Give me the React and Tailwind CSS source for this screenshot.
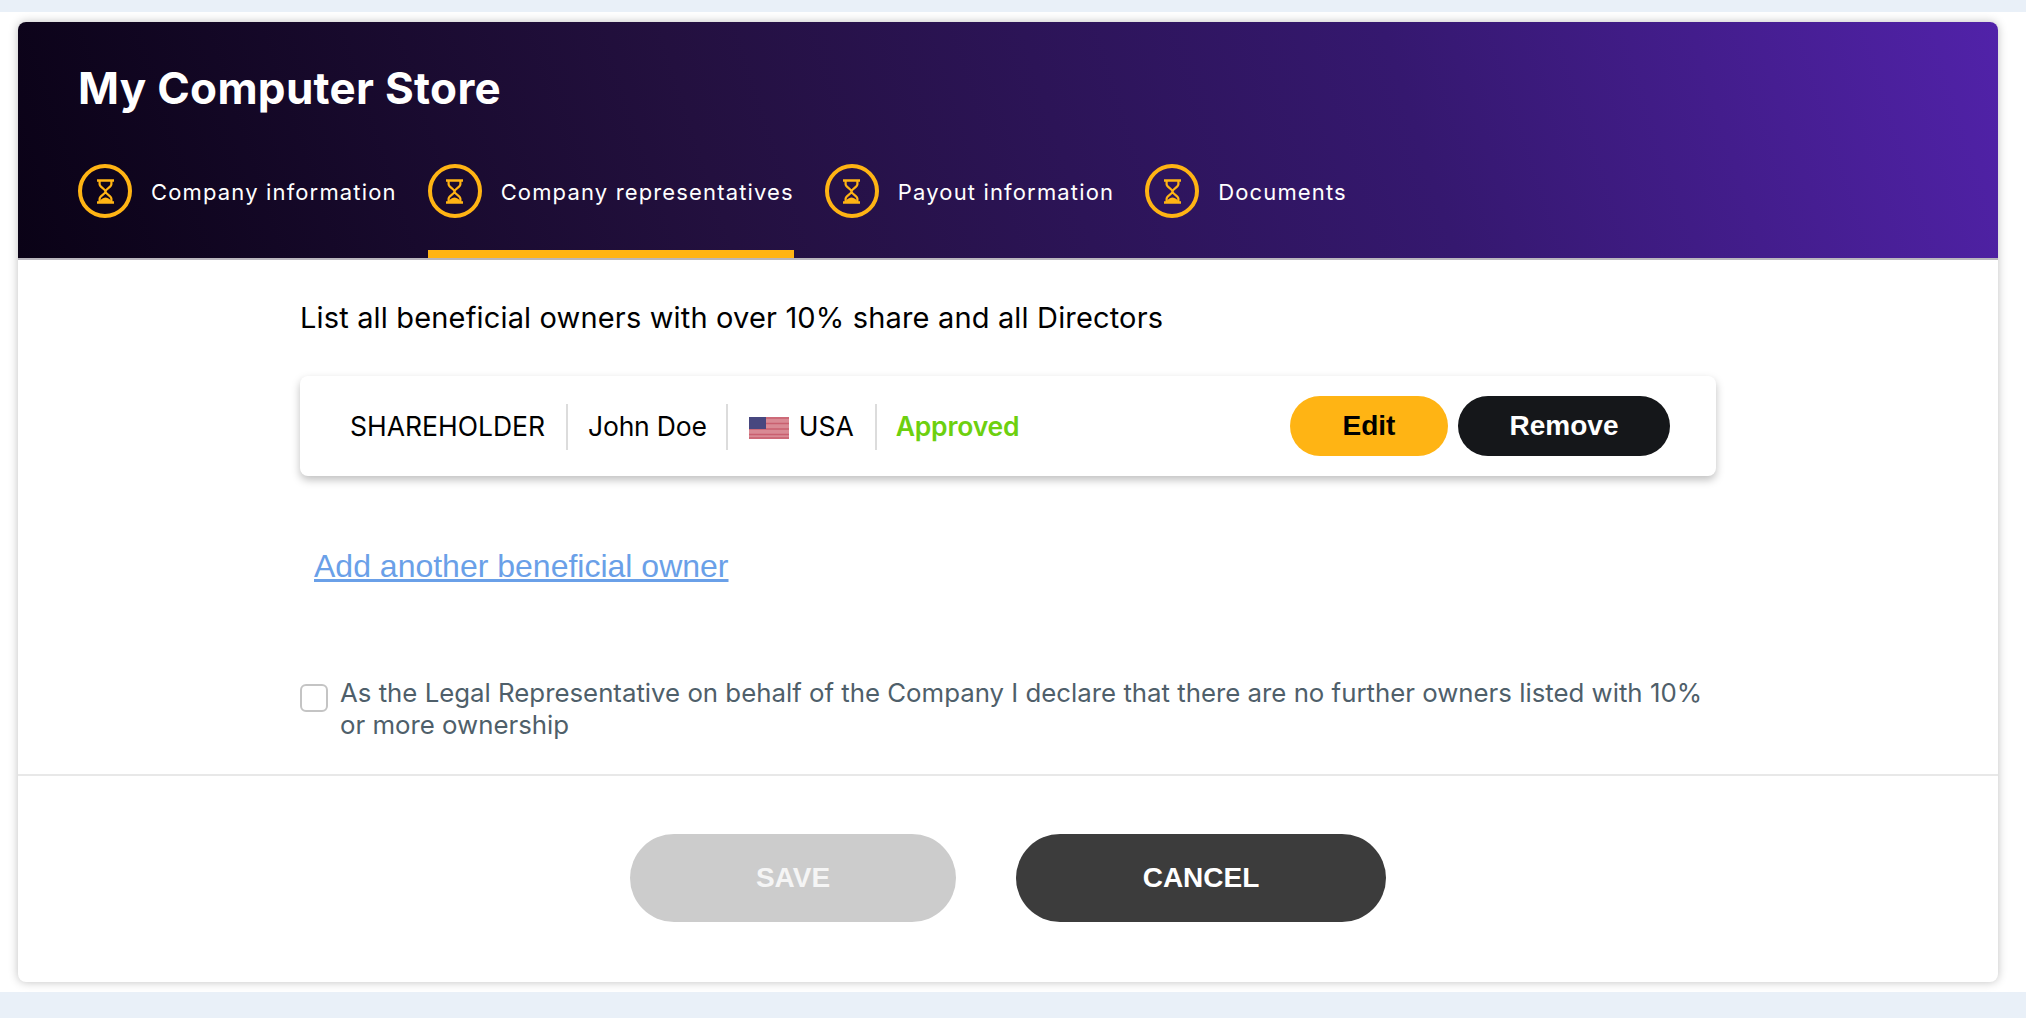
// Company representatives step of the onboarding form
import React from "react";

const tabs = [
  { label: "Company information" },
  { label: "Company representatives", active: true },
  { label: "Payout information" },
  { label: "Documents" },
];

function Hourglass() {
  return (
    <svg width="17" height="25" viewBox="0 0 17 25" fill="none">
      <path d="M0.5 1.5H16.5M0.5 23.5H16.5" stroke="#ffb414" strokeWidth="2.6" strokeLinecap="round" />
      <path
        d="M2.6 2V5.2C2.6 8 8.5 10 8.5 12.5C8.5 15 2.6 17 2.6 19.8V23M14.4 2V5.2C14.4 8 8.5 10 8.5 12.5C8.5 15 14.4 17 14.4 19.8V23"
        stroke="#ffb414"
        strokeWidth="2.2"
      />
      <path d="M3 23L3.4 21C5 19.4 7 18.8 8.5 18.6C10 18.8 12 19.4 13.6 21L14 23Z" fill="#ffb414" />
    </svg>
  );
}

function Flag() {
  return (
    <svg width="40" height="22" viewBox="0 0 40 22" className="mt-1 shrink-0">
      <rect width="40" height="22" fill="#d98a94" />
      <path d="M0 1H40M0 6.5H40M0 12H40M0 17.5H40M0 21H40" stroke="#c9606f" strokeWidth="1.7" />
      <rect width="17" height="12" fill="#47477f" />
    </svg>
  );
}

export default function App() {
  return (
    <div className="h-[1018px] bg-[#e9f0f8] pt-3 font-['Inter',sans-serif]">
      <div className="h-[980px] bg-white pl-[18px] pr-[28px] pt-[10px]">
        <div className="flex h-[960px] flex-col rounded-lg bg-white shadow-[0_0_10px_rgba(0,0,0,0.25)]">
          <div className="h-[238px] rounded-t-lg border-b-2 border-[#b9b6bd] bg-[linear-gradient(72deg,#0a0216_0%,#23103f_35%,#35186f_70%,#5122a9_100%)] pl-[60px] pt-[44px]">
            <h1 className="text-[44px] leading-[44px] font-bold tracking-[0.3px] text-white">My Computer Store</h1>
            <div className="mt-[54px] flex gap-[31px]">
              {tabs.map((t) => (
                <div
                  key={t.label}
                  className={`flex h-[94px] items-start gap-[19px] border-b-8 ${
                    t.active ? "border-[#ffb414]" : "border-transparent"
                  }`}
                >
                  <div className="flex h-[54px] w-[54px] items-center justify-center rounded-full border-[4px] border-[#ffb414]">
                    <Hourglass />
                  </div>
                  <span className="text-[22px] leading-[56px] tracking-[1.15px] text-white">{t.label}</span>
                </div>
              ))}
            </div>
          </div>

          <div className="pl-[282px] pr-[282px] pt-10">
            <p className="text-[29px] leading-9 tracking-[0.16px] text-black">List all beneficial owners with over 10% share and all Directors</p>

            <div className="mt-10 flex h-[100px] items-center rounded-lg bg-white pl-[50px] pr-[46px] shadow-[0_4px_8px_rgba(0,0,0,0.25)]">
              <span className="mt-0.5 text-[26.5px] text-black">SHAREHOLDER</span>
              <div className="mt-0.5 mr-[20px] ml-[21px] h-[46px] w-0.5 bg-[#dcdcdc]" />
              <span className="mt-0.5 text-[26.5px] tracking-[-0.2px] text-black">John Doe</span>
              <div className="mt-0.5 mr-[21px] ml-[19px] h-[46px] w-0.5 bg-[#dcdcdc]" />
              <Flag />
              <span className="mt-0.5 ml-[10px] text-[26.5px] text-black">USA</span>
              <div className="mt-0.5 mr-[19px] ml-[21px] h-[46px] w-0.5 bg-[#dcdcdc]" />
              <span className="mt-0.5 text-[26.5px] font-semibold tracking-[-0.2px] text-[#6dd00f]">Approved</span>
              <div className="ml-auto flex gap-[10px] font-['Liberation_Sans',sans-serif] text-[28px] font-bold">
                <button className="h-[60px] w-[158px] rounded-full bg-[#ffb414] text-black">Edit</button>
                <button className="h-[60px] w-[212px] rounded-full bg-[#15171a] text-white">Remove</button>
              </div>
            </div>

            <a href="#" className="mt-[72px] ml-[14px] block font-['Liberation_Sans',sans-serif] text-[32px] leading-9 text-[#6aa0e8] underline">
              Add another beneficial owner
            </a>

            <label className="mt-[93px] flex items-start gap-3">
              <span className="mt-[7px] h-7 w-7 shrink-0 rounded-[6px] border-2 border-[#c4c4c4] bg-white" />
              <span className="text-[25.8px] leading-8 text-[#4f5f6a]">
                As the Legal Representative on behalf of the Company I declare that there are no further owners listed with 10% or more ownership
              </span>
            </label>
          </div>

          <div className="mt-[33px] border-t-2 border-[#e8e8e8]" />

          <div className="mt-[58px] flex justify-center gap-[60px] font-['Liberation_Sans',sans-serif] text-[28px] font-bold">
            <button className="h-[88px] w-[326px] rounded-[44px] bg-[#cccccc] text-[#f5f5f5]">SAVE</button>
            <button className="h-[88px] w-[370px] rounded-[44px] bg-[#3c3c3c] text-white">CANCEL</button>
          </div>
        </div>
      </div>
    </div>
  );
}
